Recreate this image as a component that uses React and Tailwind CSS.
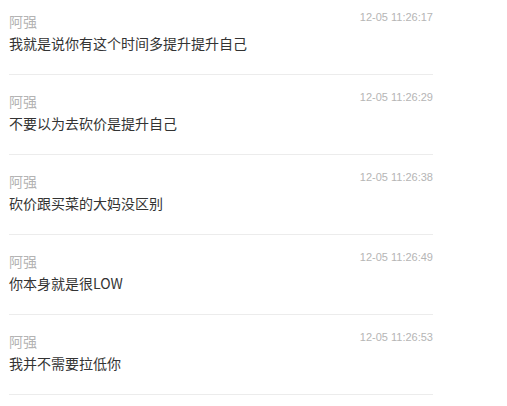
import React from "react";

const messages = [
    { name: "阿强", time: "12-05 11:26:17", text: "我就是说你有这个时间多提升提升自己" },
    { name: "阿强", time: "12-05 11:26:29", text: "不要以为去砍价是提升自己" },
    { name: "阿强", time: "12-05 11:26:38", text: "砍价跟买菜的大妈没区别" },
    { name: "阿强", time: "12-05 11:26:49", text: "你本身就是很LOW" },
    { name: "阿强", time: "12-05 11:26:53", text: "我并不需要拉低你" },
];

export default function App() {
    return (
        <div className="w-[507px] h-[406px] overflow-hidden bg-white font-['Noto_Sans_CJK_SC',sans-serif]">
            <ul className="ml-[9px] w-[424px] -mt-[5px]">
                {messages.map((m, i) => (
                    <li key={i} className="h-[80px] pt-[16px] border-b border-[#ececec]">
                        <div className="flex justify-between items-start">
                            <span className="text-[14px] leading-[20px] text-[#b3b3b3]">{m.name}</span>
                            <span className="text-[11px] leading-[12px] text-[#b5b5b5] font-['Liberation_Sans',sans-serif]">{m.time}</span>
                        </div>
                        <p className="text-[14px] leading-[24px] text-[#333]">{m.text}</p>
                    </li>
                ))}
            </ul>
        </div>
    );
}
